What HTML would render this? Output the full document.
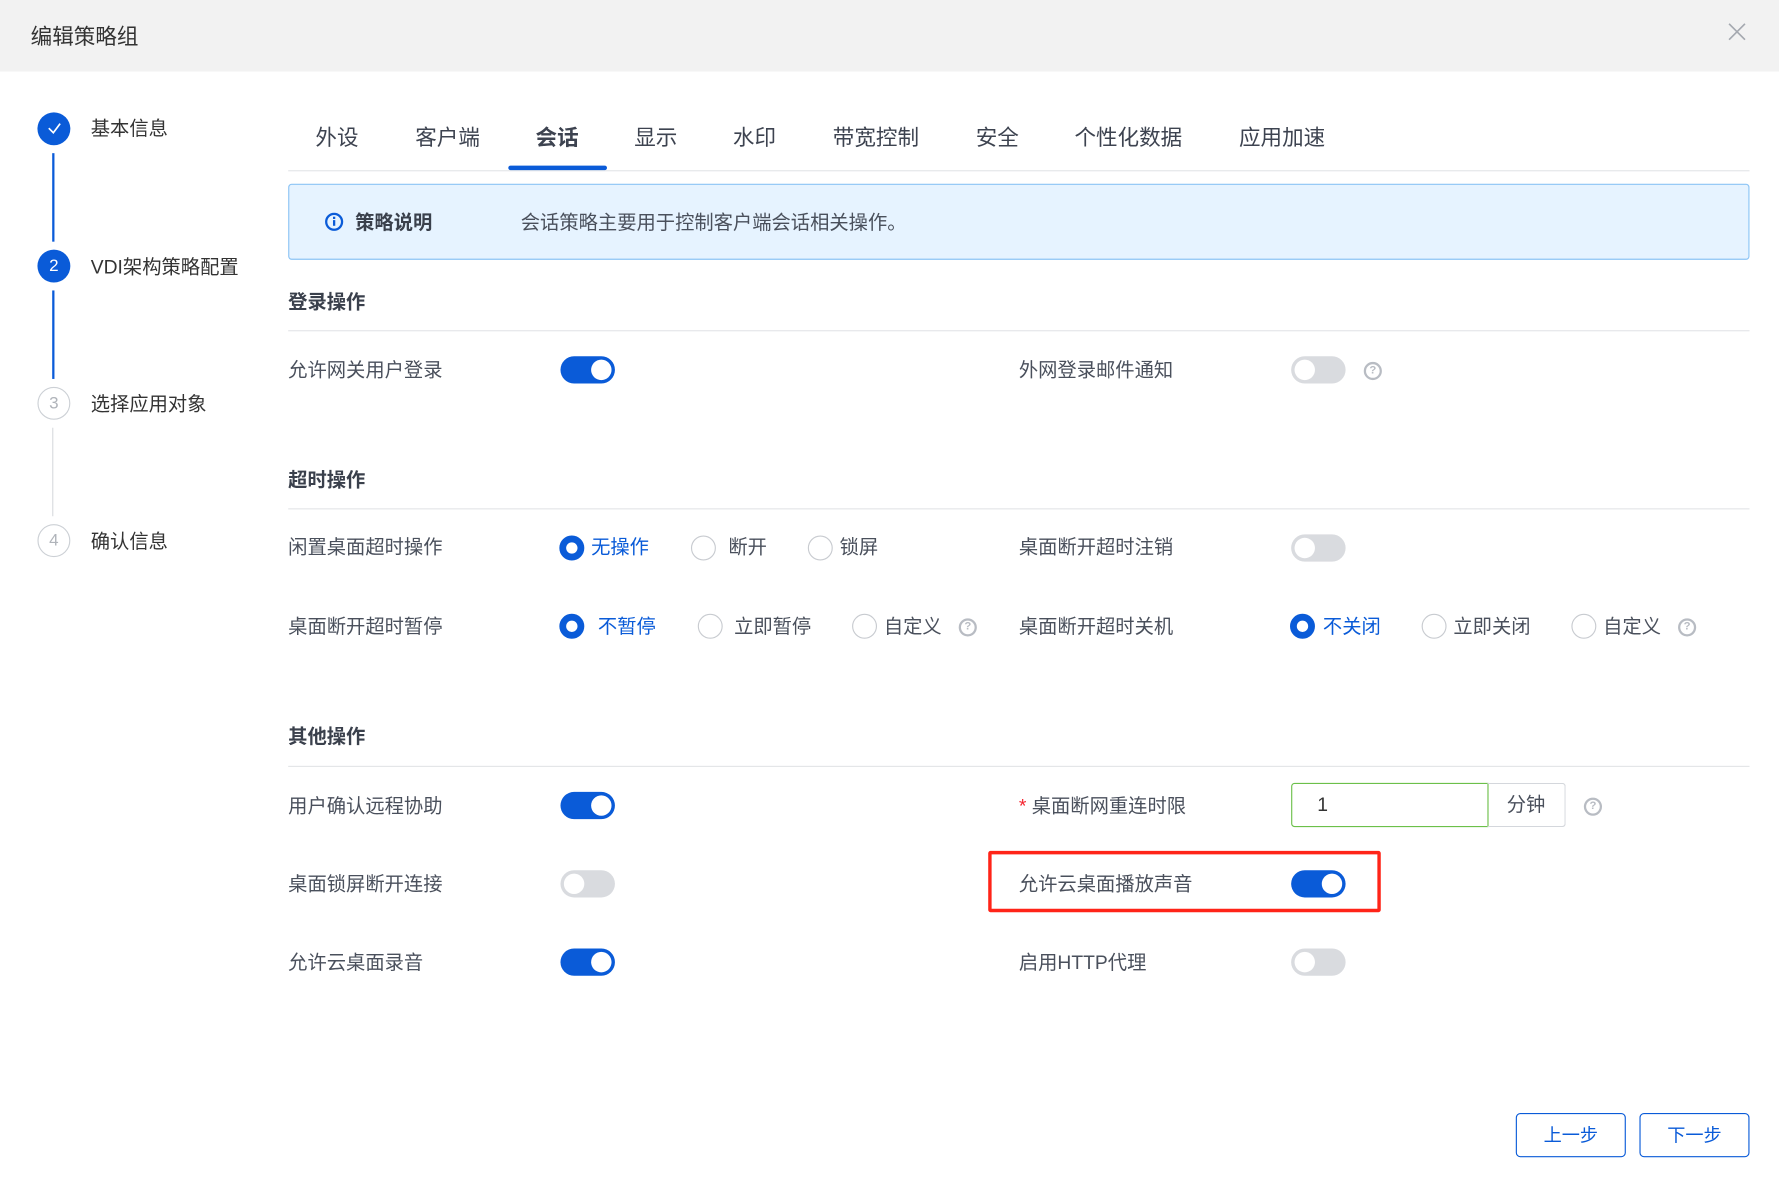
<!DOCTYPE html>
<html><head><meta charset="utf-8"><style>
*{margin:0;padding:0;box-sizing:border-box}
html,body{width:1779px;height:1186px;overflow:hidden;background:#fff}
#w{position:absolute;left:0;top:0;width:1568px;height:1046px;transform:scale(1.13457);transform-origin:0 0;font-family:"Liberation Sans","Noto Sans CJK SC",sans-serif;color:#4a505c}
.a{position:absolute;white-space:nowrap}
.t{font-size:17px;line-height:24px;transform:translateY(-11px)}
.sec{font-size:17px;font-weight:bold;color:#3a404c;line-height:24px;transform:translateY(-11px)}
.hl{position:absolute;left:254px;width:1288px;height:1px;background:#e3e5e8}
.tg{position:absolute;width:48px;height:24px;border-radius:12px;transform:translateY(-12px)}
.tg.on{background:#0a5bd8}.tg.off{background:#d9dbdf}
.tg::after{content:"";position:absolute;top:3px;width:18px;height:18px;border-radius:50%;background:#fff}
.tg.on::after{left:27px}.tg.off::after{left:3px}
.r{position:absolute;width:22px;height:22px;border-radius:50%;border:1px solid #c8cbd0;background:#fff;transform:translateY(-11px)}
.r.on{border:6px solid #0a5bd8}
.q{position:absolute;width:16px;height:16px;border-radius:50%;border:2px solid #b8bcc3;color:#b8bcc3;font-size:10px;line-height:12px;text-align:center;font-weight:bold;transform:translateY(-8px)}
.blue{color:#0a5bd8}
.sc{position:absolute;left:33px;width:29px;height:29px;border-radius:50%;text-align:center;font-size:15px;line-height:29px;transform:translateY(-14px)}
.sc.on{background:#0a5bd8;color:#fff}.sc.off{border:1px solid #ccd0d5;color:#b0b4ba;line-height:27px}
.tab{font-size:19px;line-height:26px;transform:translateY(-12px);color:#3d4350}
</style></head><body><div id="w">
<div class="a" style="left:0;top:0;width:1568px;height:63px;background:#f2f2f2"></div>
<div class="a" style="left:27px;top:30px;font-size:19px;color:#333;transform:translateY(-12px)">编辑策略组</div>
<svg class="a" style="left:1523px;top:20px" width="16" height="16"><path d="M1 1L15 15M15 1L1 15" stroke="#a5a9b0" stroke-width="1.5"/></svg>

<div class="sc on" style="top:113px"><svg width="14" height="14" style="margin-top:7px"><path d="M2 7L6 11L12 3" fill="none" stroke="#fff" stroke-width="1.5"/></svg></div>
<div class="a t" style="left:80px;top:113px;color:#333">基本信息</div>
<div class="a" style="left:46px;top:135px;width:2px;height:78px;background:#0a5bd8"></div>
<div class="sc on" style="top:234px">2</div>
<div class="a t" style="left:80px;top:235px;color:#333">VDI架构策略配置</div>
<div class="a" style="left:46px;top:256px;width:2px;height:78px;background:#0a5bd8"></div>
<div class="sc off" style="top:355px">3</div>
<div class="a t" style="left:80px;top:356px;color:#333">选择应用对象</div>
<div class="a" style="left:46px;top:377px;width:1px;height:78px;background:#d9dbdf"></div>
<div class="sc off" style="top:476px">4</div>
<div class="a t" style="left:80px;top:477px;color:#333">确认信息</div>

<div class="a tab" style="left:278px;top:122px">外设</div>
<div class="a tab" style="left:366px;top:122px">客户端</div>
<div class="a tab blue" style="left:472px;top:122px;font-weight:bold">会话</div>
<div class="a tab" style="left:559px;top:122px">显示</div>
<div class="a tab" style="left:646px;top:122px">水印</div>
<div class="a tab" style="left:734px;top:122px">带宽控制</div>
<div class="a tab" style="left:860px;top:122px">安全</div>
<div class="a tab" style="left:947px;top:122px">个性化数据</div>
<div class="a tab" style="left:1092px;top:122px">应用加速</div>
<div class="hl" style="top:150px"></div>
<div class="a" style="left:448px;top:146px;width:87px;height:4px;border-radius:2px;background:#0a5bd8"></div>

<div class="a" style="left:254px;top:162px;width:1288px;height:67px;background:#e6f3ff;border:1px solid #8cc4f5;border-radius:3px"></div>
<svg class="a" style="left:286px;top:187px" width="17" height="17"><circle cx="8.5" cy="8.5" r="7" fill="none" stroke="#0a5bd8" stroke-width="2"/><rect x="7.5" y="7" width="2" height="5" fill="#0a5bd8"/><rect x="7.5" y="4" width="2" height="2" fill="#0a5bd8"/></svg>
<div class="a t" style="left:313px;top:196px;font-weight:bold;color:#3a404c">策略说明</div>
<div class="a t" style="left:459px;top:196px">会话策略主要用于控制客户端会话相关操作。</div>

<div class="a sec" style="left:254px;top:266px">登录操作</div>
<div class="hl" style="top:291px"></div>
<div class="a t" style="left:254px;top:326px">允许网关用户登录</div>
<div class="tg on" style="left:494px;top:326px"></div>
<div class="a t" style="left:898px;top:326px">外网登录邮件通知</div>
<div class="tg off" style="left:1138px;top:326px"></div>
<div class="q" style="left:1202px;top:327px">?</div>

<div class="a sec" style="left:254px;top:423px">超时操作</div>
<div class="hl" style="top:448px"></div>
<div class="a t" style="left:254px;top:482px">闲置桌面超时操作</div>
<div class="r on" style="left:493px;top:483px"></div><div class="a t blue" style="left:521px;top:482px">无操作</div>
<div class="r" style="left:609px;top:483px"></div><div class="a t" style="left:642px;top:482px">断开</div>
<div class="r" style="left:712px;top:483px"></div><div class="a t" style="left:740px;top:482px">锁屏</div>
<div class="a t" style="left:898px;top:482px">桌面断开超时注销</div>
<div class="tg off" style="left:1138px;top:483px"></div>

<div class="a t" style="left:254px;top:552px">桌面断开超时暂停</div>
<div class="r on" style="left:493px;top:552px"></div><div class="a t blue" style="left:527px;top:552px">不暂停</div>
<div class="r" style="left:615px;top:552px"></div><div class="a t" style="left:647px;top:552px">立即暂停</div>
<div class="r" style="left:751px;top:552px"></div><div class="a t" style="left:779px;top:552px">自定义</div>
<div class="q" style="left:845px;top:553px">?</div>
<div class="a t" style="left:898px;top:552px">桌面断开超时关机</div>
<div class="r on" style="left:1137px;top:552px"></div><div class="a t blue" style="left:1166px;top:552px">不关闭</div>
<div class="r" style="left:1253px;top:552px"></div><div class="a t" style="left:1281px;top:552px">立即关闭</div>
<div class="r" style="left:1385px;top:552px"></div><div class="a t" style="left:1413px;top:552px">自定义</div>
<div class="q" style="left:1479px;top:553px">?</div>

<div class="a sec" style="left:254px;top:649px">其他操作</div>
<div class="hl" style="top:675px"></div>
<div class="a t" style="left:254px;top:710px">用户确认远程协助</div>
<div class="tg on" style="left:494px;top:710px"></div>
<div class="a t" style="left:898px;top:710px"><span style="color:#f5222d">*</span> 桌面断网重连时限</div>
<div class="a" style="left:1138px;top:690px;width:174px;height:39px;border:1px solid #6cc04a;border-radius:3px 0 0 3px;font-size:17px;line-height:37px;padding-left:22px;color:#333">1</div>
<div class="a" style="left:1311px;top:690px;width:69px;height:39px;border:1px solid #d4d7dc;border-left:none;border-radius:0 3px 3px 0;font-size:17px;line-height:37px;text-align:center">分钟</div>
<div class="q" style="left:1396px;top:711px">?</div>

<div class="a t" style="left:254px;top:779px">桌面锁屏断开连接</div>
<div class="tg off" style="left:494px;top:779px"></div>
<div class="a" style="left:871px;top:750px;width:346px;height:54px;border:3px solid #ff2418;border-radius:2px"></div>
<div class="a t" style="left:898px;top:779px">允许云桌面播放声音</div>
<div class="tg on" style="left:1138px;top:779px"></div>

<div class="a t" style="left:254px;top:848px">允许云桌面录音</div>
<div class="tg on" style="left:494px;top:848px"></div>
<div class="a t" style="left:898px;top:848px">启用HTTP代理</div>
<div class="tg off" style="left:1138px;top:848px"></div>

<div class="a" style="left:1336px;top:981px;width:97px;height:39px;border:1px solid #0a5bd8;border-radius:4px;color:#0a5bd8;font-size:16px;line-height:39px;text-align:center">上一步</div>
<div class="a" style="left:1445px;top:981px;width:97px;height:39px;border:1px solid #0a5bd8;border-radius:4px;color:#0a5bd8;font-size:16px;line-height:39px;text-align:center">下一步</div>
</div></body></html>
